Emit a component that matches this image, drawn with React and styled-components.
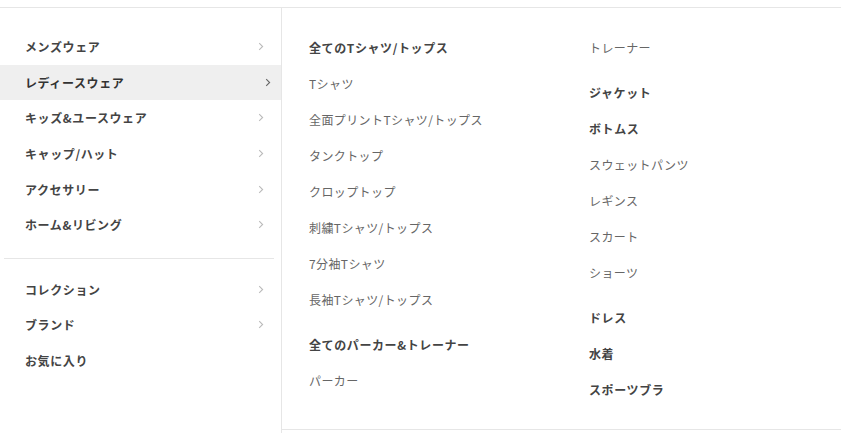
import styled, { createGlobalStyle } from "styled-components";

const GlobalStyle = createGlobalStyle`
  html, body {
    margin: 0;
    padding: 0;
    background: #fff;
  }
  body {
    font-family: "Noto Sans CJK JP", "Noto Sans", sans-serif;
    -webkit-font-smoothing: antialiased;
  }
  ul {
    list-style: none;
    margin: 0;
    padding: 0;
  }
`;

const Menu = styled.div`
  margin-top: 7px;
  border-top: 1px solid #e6e6e6;
  display: flex;
  width: 841px;
  height: 426px;
  overflow: hidden;
`;

const Sidebar = styled.nav`
  width: 282px;
  flex-shrink: 0;
  border-right: 1px solid #e6e6e6;
  padding-top: 21px;
  box-sizing: border-box;
`;

const SideRow = styled.a`
  display: flex;
  align-items: center;
  justify-content: space-between;
  height: 35.6px;
  padding-left: 25px;
  padding-right: ${(p) => (p.$active ? "10px" : "17px")};
  background: ${(p) => (p.$active ? "#efefef" : "transparent")};
  color: ${(p) => (p.$active ? "#333" : "#444")};
  font-size: 12px;
  font-weight: 700;
  letter-spacing: 0.6px;
  text-decoration: none;
  cursor: pointer;

  svg {
    stroke: ${(p) => (p.$active ? "#666" : "#bbb")};
  }
`;

const Divider = styled.hr`
  border: none;
  border-top: 1px solid #e6e6e6;
  margin: 15px 7px 13px 4px;
`;

const Content = styled.div`
  flex: 1;
  height: 422px;
  border-bottom: 1px solid #e6e6e6;
  display: flex;
  padding: 22px 0 0 27px;
  box-sizing: border-box;
`;

const Column = styled.div`
  width: 280px;
`;

const Heading = styled.a`
  display: block;
  height: 36px;
  line-height: 36px;
  color: #444;
  font-size: 12px;
  font-weight: 700;
  letter-spacing: 0.6px;
  text-decoration: none;
`;

const Items = styled.ul`
  margin-bottom: 9px;
`;

const Item = styled.li`
  height: 36px;
  line-height: 36px;
  color: #666;
  font-size: 12px;
  letter-spacing: 0.4px;
`;

const Chevron = () => (
  <svg width="6" height="9" viewBox="0 0 6 9" fill="none" strokeWidth="1.1">
    <polyline points="1.2,1.2 4.6,4.5 1.2,7.8" />
  </svg>
);

const mainNav = [
  { label: "メンズウェア", arrow: true },
  { label: "レディースウェア", arrow: true, active: true },
  { label: "キッズ&ユースウェア", arrow: true },
  { label: "キャップ/ハット", arrow: true },
  { label: "アクセサリー", arrow: true },
  { label: "ホーム&リビング", arrow: true },
];

const subNav = [
  { label: "コレクション", arrow: true },
  { label: "ブランド", arrow: true },
  { label: "お気に入り" },
];

const columns = [
  [
    {
      title: "全てのTシャツ/トップス",
      items: [
        "Tシャツ",
        "全面プリントTシャツ/トップス",
        "タンクトップ",
        "クロップトップ",
        "刺繍Tシャツ/トップス",
        "7分袖Tシャツ",
        "長袖Tシャツ/トップス",
      ],
    },
    { title: "全てのパーカー&トレーナー", items: ["パーカー"] },
  ],
  [
    { items: ["トレーナー"] },
    { title: "ジャケット" },
    { title: "ボトムス", items: ["スウェットパンツ", "レギンス", "スカート", "ショーツ"] },
    { title: "ドレス" },
    { title: "水着" },
    { title: "スポーツブラ" },
  ],
];

const SideLink = ({ item }) => (
  <SideRow href="#" $active={item.active}>
    <span>{item.label}</span>
    {item.arrow && <Chevron />}
  </SideRow>
);

export default function App() {
  return (
    <>
      <GlobalStyle />
      <Menu>
        <Sidebar>
          {mainNav.map((item) => (
            <SideLink key={item.label} item={item} />
          ))}
          <Divider />
          {subNav.map((item) => (
            <SideLink key={item.label} item={item} />
          ))}
        </Sidebar>
        <Content>
          {columns.map((col, i) => (
            <Column key={i}>
              {col.map((group, j) => (
                <div key={j}>
                  {group.title && <Heading href="#">{group.title}</Heading>}
                  {group.items && (
                    <Items>
                      {group.items.map((it) => (
                        <Item key={it}>{it}</Item>
                      ))}
                    </Items>
                  )}
                </div>
              ))}
            </Column>
          ))}
        </Content>
      </Menu>
    </>
  );
}
